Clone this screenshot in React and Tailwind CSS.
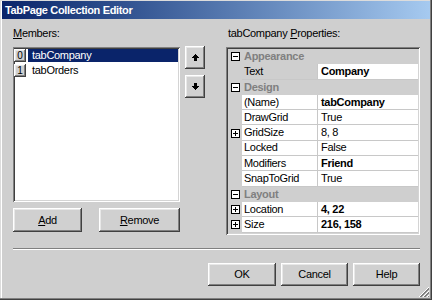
import React from 'react'

const raised = 'shadow-[inset_-1px_-1px_0_#404040,inset_1px_1px_0_#ffffff,inset_-2px_-2px_0_#808080,inset_2px_2px_0_#e8e8e8]'
const sunken = 'shadow-[inset_1px_1px_0_#808080,inset_-1px_-1px_0_#ffffff,inset_2px_2px_0_#404040,inset_-2px_-2px_0_#d4d4d4]'

const PROPS = [
  { cat: 'Appearance' },
  { name: 'Text', value: 'Company', bold: true, greyName: true },
  { cat: 'Design' },
  { name: '(Name)', value: 'tabCompany', bold: true },
  { name: 'DrawGrid', value: 'True' },
  { name: 'GridSize', value: '8, 8', expand: true },
  { name: 'Locked', value: 'False' },
  { name: 'Modifiers', value: 'Friend', bold: true },
  { name: 'SnapToGrid', value: 'True' },
  { cat: 'Layout' },
  { name: 'Location', value: '4, 22', bold: true, expand: true },
  { name: 'Size', value: '216, 158', bold: true, expand: true },
]

function Toggle({ plus }) {
  return (
    <svg width="9" height="9" viewBox="0 0 9 9" className="block">
      <rect x="0.5" y="0.5" width="8" height="8" fill="#ffffff" stroke="#000000" />
      <rect x="2" y="4" width="5" height="1" fill="#000000" />
      {plus && <rect x="4" y="2" width="1" height="5" fill="#000000" />}
    </svg>
  )
}

function Arrow({ down }) {
  return (
    <svg width="7" height="7" viewBox="0 0 7 7" className={down ? 'block rotate-180' : 'block'}>
      <rect x="3" y="0" width="1" height="1" fill="#000" />
      <rect x="2" y="1" width="3" height="1" fill="#000" />
      <rect x="1" y="2" width="5" height="1" fill="#000" />
      <rect x="0" y="3" width="7" height="1" fill="#000" />
      <rect x="2" y="4" width="3" height="3" fill="#000" />
    </svg>
  )
}

function Button({ children, className = '' }) {
  return (
    <div className={`flex items-center justify-center bg-[#d0d0d0] text-black ${raised} ${className}`}>
      {children}
    </div>
  )
}

function Grip() {
  return (
    <svg width="12" height="12" viewBox="0 0 12 12" className="block">
      {[0, 4, 8].map(o => (
        <g key={o}>
          <line x1={11} y1={o + 1} x2={o + 1} y2={11} stroke="#ffffff" />
          <line x1={11} y1={o + 2} x2={o + 2} y2={11} stroke="#808080" />
          <line x1={11} y1={o + 3} x2={o + 3} y2={11} stroke="#808080" />
        </g>
      ))}
    </svg>
  )
}

export default function App() {
  return (
    <div className={`relative w-[432px] h-[300px] overflow-hidden bg-[#cfcfcf] font-['Liberation_Sans',Arial,sans-serif] text-[11px] tracking-[-0.3px] leading-[13px] text-black shadow-[inset_-1px_-1px_0_#404040,inset_-2px_-2px_0_#808080,inset_1px_1px_0_#dcdcdc,inset_2px_2px_0_#ffffff]`}>
      {/* Title bar */}
      <div className="mx-[2px] mt-[1px] h-[18px] flex items-center pl-[3px] bg-gradient-to-r from-[#0a246a] to-[#a6caf0]">
        <span className="text-white font-bold text-[11px] tracking-[-0.35px]">TabPage Collection Editor</span>
      </div>

      {/* Main area */}
      <div className="flex pl-[13px] mt-[8px]">
        {/* Members */}
        <div className="w-[167px] flex flex-col">
          <div className="h-[13px] pl-[0px]"><span className="underline">M</span>embers:</div>
          <div className={`mt-[7px] h-[155px] bg-white ${sunken} pt-[1px] pl-[1px] pr-[2px]`}>
            {['tabCompany', 'tabOrders'].map((m, i) => (
              <div key={m} className="flex items-center h-[15px]">
                <div className={`w-[12px] h-[13px] flex items-center justify-center text-[10px] bg-[#d0d0d0] ${raised}`}>{i}</div>
                <div className={`ml-[2px] flex-1 h-[13px] flex items-center pl-[4px] ${i === 0 ? 'bg-[#0a246a] text-white' : ''}`}>{m}</div>
              </div>
            ))}
          </div>
          <div className="mt-[6px] flex gap-[17px]">
            <Button className="w-[69px] h-[24px]"><span className="underline">A</span>dd</Button>
            <Button className="w-[81px] h-[24px]"><span className="underline">R</span>emove</Button>
          </div>
        </div>

        {/* Up / down */}
        <div className="ml-[5px] pt-[19px] flex flex-col gap-[6px]">
          <Button className="w-[20px] h-[23px]"><Arrow /></Button>
          <Button className="w-[20px] h-[23px]"><Arrow down /></Button>
        </div>

        {/* Properties */}
        <div className="ml-[21px] w-[194px] flex flex-col">
          <div className="h-[13px] pl-[2px]">tabCompany <span className="underline">P</span>roperties:</div>
          <div className={`mt-[7px] h-[188px] bg-[#cfcfcf] ${sunken} p-[2px]`}>
            <div className="flex flex-col">
              {PROPS.map((p, i) =>
                p.cat ? (
                  <div key={i} className="flex items-center h-[15.3px]">
                    <div className="w-[14px] flex justify-center"><Toggle /></div>
                    <div className="pl-[2px] font-bold text-[#808080]">{p.cat}</div>
                  </div>
                ) : (
                  <div key={i} className="flex h-[15.3px]">
                    <div className="w-[14px] flex items-center justify-center">{p.expand && <Toggle plus />}</div>
                    <div className={`w-[76px] flex items-center pl-[2px] border-b border-r border-[#c8c8c8] ${p.greyName ? 'bg-[#cfcfcf]' : 'bg-white'}`}>{p.name}</div>
                    <div className={`flex-1 flex items-center pl-[3px] bg-white border-b border-[#c8c8c8] ${p.bold ? 'font-bold' : ''}`}>{p.value}</div>
                  </div>
                )
              )}
            </div>
          </div>
        </div>
      </div>

      {/* Separator */}
      <div className="ml-[13px] mr-[12px] mt-[13px] border-t border-[#808080] border-b border-b-white" />

      {/* Dialog buttons */}
      <div className="mt-[13px] flex justify-end gap-[5px] pr-[12px]">
        <Button className="w-[68px] h-[23px]">OK</Button>
        <Button className="w-[67px] h-[23px]">Cancel</Button>
        <Button className="w-[67px] h-[23px]">Help</Button>
      </div>

      <div className="absolute right-[2px] bottom-[2px]"><Grip /></div>
    </div>
  )
}
